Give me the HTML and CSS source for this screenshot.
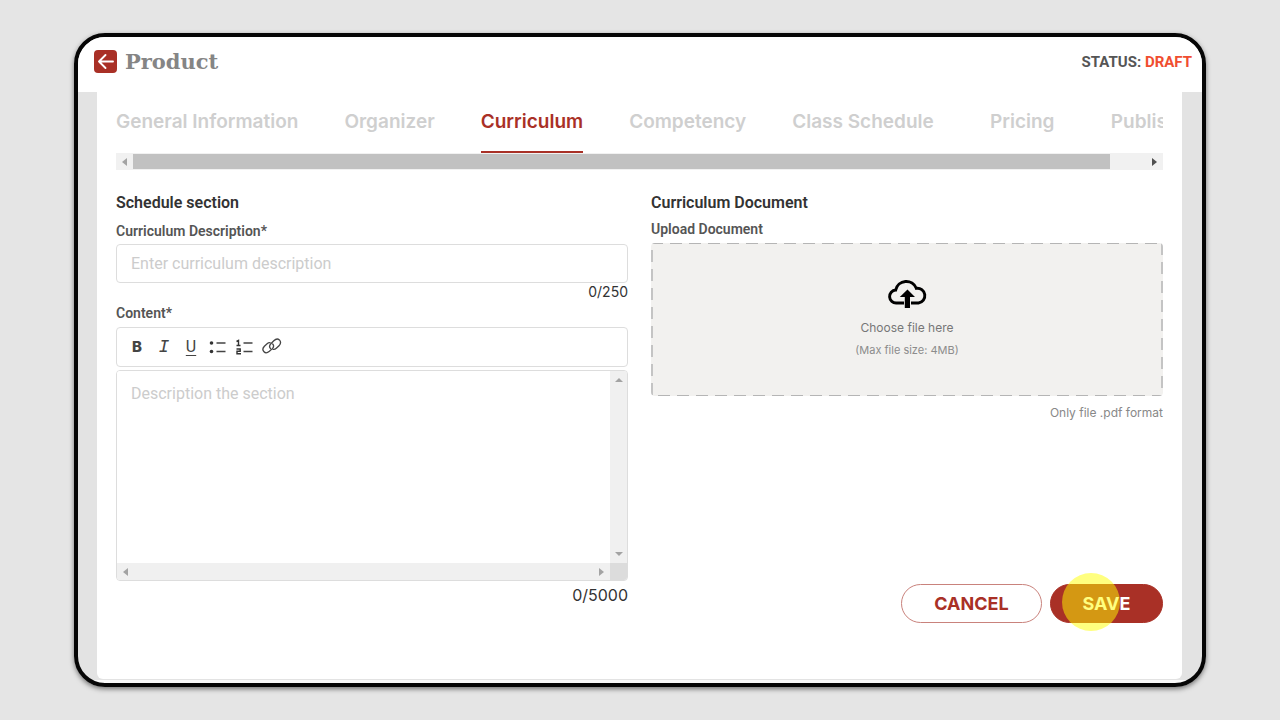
FILE: index.html
```html
<!DOCTYPE html>
<html lang="en">
<head>
<meta charset="utf-8">
<meta name="viewport" content="width=device-width, initial-scale=1">
<title>Product</title>
<link rel="stylesheet" href="styles.css">
</head>
<body>
<div class="window">
  <header class="topbar">
    <button class="back" type="button" aria-label="Back">
      <svg viewBox="0 0 23 23" width="23" height="23"><path d="M19 11.5H5M11.500 5 5 11.500l6.500 6.500" fill="none" stroke="#fff" stroke-width="1.900" stroke-linecap="round" stroke-linejoin="round"/></svg>
    </button>
    <h1 class="title">Product</h1>
    <p class="status">STATUS: <span class="status-value">DRAFT</span></p>
  </header>
  <main class="card">
    <nav class="tabs" aria-label="Product sections">
      <a class="tab" href="#general">General Information</a>
      <a class="tab" href="#organizer">Organizer</a>
      <a class="tab tab-active" href="#curriculum" aria-current="page">Curriculum</a>
      <a class="tab" href="#competency">Competency</a>
      <a class="tab" href="#schedule">Class Schedule</a>
      <a class="tab" href="#pricing">Pricing</a>
      <a class="tab" href="#publish">Publishing</a>
    </nav>
    <div class="scroller" aria-hidden="true">
      <span class="arrow arrow-left"></span>
      <span class="track"><span class="thumb"></span></span>
      <span class="arrow arrow-right arrow-dark"></span>
    </div>
    <form class="columns">
      <section class="column">
        <h2 class="heading">Schedule section</h2>
        <label class="label label-first" for="description">Curriculum Description*</label>
        <input class="input" id="description" type="text" placeholder="Enter curriculum description">
        <p class="count">0/250</p>
        <label class="label label-content" for="content">Content*</label>
        <div class="toolbar" role="toolbar" aria-label="Formatting">
          <button class="tool bold" type="button">B</button>
          <button class="tool italic" type="button">I</button>
          <button class="tool underline" type="button">U</button>
          <button class="tool" type="button" aria-label="Bulleted list">
            <svg viewBox="0 0 20 20" width="20" height="20"><circle cx="3.500" cy="6" r="1.800" fill="#333"/><circle cx="3.500" cy="14.500" r="1.800" fill="#333"/><path d="M8.500 6h9M8.500 14.500h9" stroke="#444" stroke-width="1.300"/></svg>
          </button>
          <button class="tool" type="button" aria-label="Numbered list">
            <svg viewBox="0 0 20 20" width="20" height="20"><path d="M1.500 4.500l2-1v5M1.500 8.500h4M1.500 12h3.700v2.200H2v2.600h4" fill="none" stroke="#333" stroke-width="1.400"/><path d="M8.500 6h9M8.500 14.500h9" stroke="#444" stroke-width="1.300"/></svg>
          </button>
          <button class="tool" type="button" aria-label="Link">
            <svg viewBox="0 0 20 20" width="20" height="20"><g fill="none" stroke="#444" stroke-width="1.300" stroke-linecap="round"><path d="M8.500 11.500c-1.600-1.700-.8-3.600.6-5l2.700-2.800c1.800-1.700 4.200-2 5.600-.8 1.500 1.500 1.200 4-.4 5.900l-2.700 2.500c-1 .9-2.200 1.300-3.300 1"/><path d="M10.700 7c1.600 1.700.8 3.500-.6 4.900l-2.700 2.400c-1.800 1.500-4 2-5.400.5-1.500-1.500-1.200-3.900.4-5.600l2.700-2.400c1-.9 2-1.300 3.100-1"/></g></svg>
          </button>
        </div>
        <div class="editor">
          <textarea class="textarea" id="content" placeholder="Description the section"></textarea>
          <div class="bar bar-vertical" aria-hidden="true"><span class="arrow arrow-up"></span><span class="arrow arrow-down"></span></div>
          <div class="bar" aria-hidden="true"><span class="arrow arrow-left"></span><span class="arrow arrow-right"></span></div>
          <div class="corner"></div>
        </div>
        <p class="count count-large">0/5000</p>
      </section>
      <section class="column">
        <h2 class="heading">Curriculum Document</h2>
        <label class="label label-upload" for="document">Upload Document</label>
        <label class="drop">
          <input class="file" id="document" type="file" accept=".pdf">
          <svg class="cloud" viewBox="0 0 40 32" width="40" height="32"><path d="M17 25H9.500a6.500 6.500 0 0 1-.8-13A10.800 10.800 0 0 1 29.300 10.300 7.400 7.400 0 0 1 31.500 25H24" fill="none" stroke="#000" stroke-width="2.900"/><path d="M17.800 30V19h-5L20.500 11.500 28 19h-5v11z" fill="#000"/></svg>
          <span class="drop-main">Choose file here</span>
          <span class="drop-hint">(Max file size: 4MB)</span>
        </label>
        <p class="note">Only file .pdf format</p>
        <div class="actions">
          <button class="button cancel" type="button">CANCEL</button>
          <button class="button save" type="button">SAVE<span class="highlight"></span></button>
        </div>
      </section>
    </form>
  </main>
</div>
</body>
</html>
```
FILE: styles.css
```css
* { box-sizing: border-box; }
body {
  margin: 0;
  min-height: 100vh;
  padding: 33px 74px;
  display: flex;
  background: #e5e5e5;
  color: #333;
  font-family: Roboto, sans-serif;
}
h1, h2, p { margin: 0; }
button, input, textarea { font-family: inherit; }
.window {
  flex: 1;
  min-width: 0;
  display: flex;
  flex-direction: column;
  border: 4px solid #060606;
  border-radius: 31px;
  overflow: hidden;
  background: linear-gradient(#e3e3e3 calc(100% - 3px), #fafafa 0);
  box-shadow: 0 2px 5px rgba(0, 0, 0, .5);
}
.topbar {
  display: flex;
  align-items: center;
  height: 55px;
  padding: 0 10px 6px 16px;
  background: #fff;
}
.back {
  width: 23px;
  height: 23px;
  padding: 0;
  border: 0;
  border-radius: 4px;
  background: #a93026;
}
.back svg, .tool svg { display: block; }
.title {
  margin-left: 8px;
  color: #858585;
  font: bold 21px/28px "DejaVu Serif", serif;
}
.status {
  margin-left: auto;
  color: #555;
  font-size: 15px;
  font-weight: 700;
}
.status-value { color: #f04e30; }
.card {
  flex: 1;
  margin: 0 20px 4px 19px;
  padding: 0 19px;
  border-radius: 0 0 6px 6px;
  background: #fff;
}
.tabs {
  display: flex;
  gap: 46px;
  height: 61px;
  overflow: hidden;
}
.tab {
  flex: none;
  min-width: 85px;
  padding-top: 18px;
  border-bottom: 2px solid transparent;
  color: #cfcfcf;
  font: 600 19px/24px Inter, sans-serif;
  text-align: center;
  text-decoration: none;
  white-space: nowrap;
}
.tab-active { color: #a93026; border-color: #a93026; }
.scroller {
  display: flex;
  align-items: center;
  height: 17px;
  padding: 0 6px;
  background: #f1f1f1;
}
.track { flex: 1; margin: 0 6px; }
.thumb { display: block; width: 96.4%; height: 15px; background: #c1c1c1; }
.arrow { border: 4px solid transparent; }
.arrow-left { border-left-width: 0; border-right: 5px solid #a3a3a3; }
.arrow-right { border-right-width: 0; border-left: 5px solid #a3a3a3; }
.arrow-up { border-top-width: 0; border-bottom: 4px solid #a3a3a3; }
.arrow-down { border-bottom-width: 0; border-top: 4px solid #a3a3a3; }
.arrow-dark { border-left-color: #505050; }
.columns {
  display: grid;
  grid-template-columns: 1fr 1fr;
  gap: 23px;
  padding: 23px 0 56px;
}
.column { display: flex; flex-direction: column; min-width: 0; }
.heading { font-size: 16px; line-height: 20px; font-weight: 600; }
.label { color: #555; font: 600 14px/16px Roboto, sans-serif; }
.label-first { margin: 10px 0 5px; }
.label-content { margin: 4px 0 6px; }
.label-upload { margin: 8px 0 6px; }
.input {
  width: 100%;
  height: 39px;
  padding: 0 14px;
  border: 1px solid #ddd;
  border-radius: 4px;
  font-size: 16px;
}
::placeholder { color: #ccc; opacity: 1; }
.count { font: 14px/18px Inter, sans-serif; text-align: right; }
.toolbar {
  display: flex;
  align-items: center;
  gap: 7px;
  height: 40px;
  padding-left: 10px;
  border: 1px solid #ddd;
  border-radius: 4px;
}
.tool {
  width: 20px;
  height: 22px;
  padding: 0;
  border: 0;
  background: none;
  color: #444;
  font-size: 16px;
  line-height: 20px;
}
.bold { font-family: Inter, sans-serif; font-weight: 800; font-size: 15px; }
.italic { font-family: "Liberation Mono", monospace; font-style: italic; font-size: 18px; }
.underline { text-decoration: underline; text-underline-offset: 3px; }
.editor {
  display: grid;
  grid-template-columns: 1fr 17px;
  grid-template-rows: 192px 17px;
  margin-top: 3px;
  border: 1px solid #ddd;
  border-radius: 4px;
  overflow: hidden;
}
.textarea {
  padding: 13px 14px;
  border: 0;
  resize: none;
  overflow: hidden;
  font-size: 16px;
  line-height: 20px;
}
.bar {
  display: flex;
  align-items: center;
  justify-content: space-between;
  padding: 0 6px;
  background: #f0f0f0;
}
.bar-vertical { flex-direction: column; padding: 7px 0; }
.corner { background: #dcdcdc; }
.count-large { margin-top: 5px; padding-bottom: 19px; font-size: 16px; }
.drop {
  display: flex;
  flex-direction: column;
  align-items: center;
  height: 153px;
  padding-top: 35px;
  border-radius: 4px;
  background:
    repeating-linear-gradient(90deg, #b5b5b5 0 12px, transparent 12px 19px) top / 100% 1px no-repeat,
    repeating-linear-gradient(90deg, transparent 0 7px, #b5b5b5 7px 19px) bottom / 100% 1px no-repeat,
    repeating-linear-gradient(transparent 0 7px, #c4c4c4 7px 19px) left / 2px 100% no-repeat,
    repeating-linear-gradient(#c4c4c4 0 12px, transparent 12px 19px) right / 2px 100% no-repeat,
    #f2f1ef;
}
.file { position: absolute; width: 1px; height: 1px; opacity: 0; }
.drop-main { margin-top: 10px; color: #777; font: 12px/16px Inter, sans-serif; }
.drop-hint { margin-top: 6px; color: #8c8c8c; font: 11px/16px Inter, sans-serif; }
.note { margin-top: 9px; color: #888; font: 12px/16px Inter, sans-serif; text-align: right; }
.actions {
  display: flex;
  justify-content: flex-end;
  gap: 8px;
  margin-top: auto;
}
.button {
  height: 39px;
  padding: 0 30px;
  border: 1px solid #a93026;
  border-radius: 20px;
  font: bold 18px/24px Inter, sans-serif;
}
.cancel { min-width: 141px; border-color: #c9827c; background: #fff; color: #a93026; }
.save { position: relative; min-width: 113px; background: #a93026; color: #fff; }
.highlight {
  position: absolute;
  left: 11px;
  top: -12px;
  width: 58px;
  height: 58px;
  border-radius: 50%;
  background: rgba(255, 255, 0, .5);
}
```
